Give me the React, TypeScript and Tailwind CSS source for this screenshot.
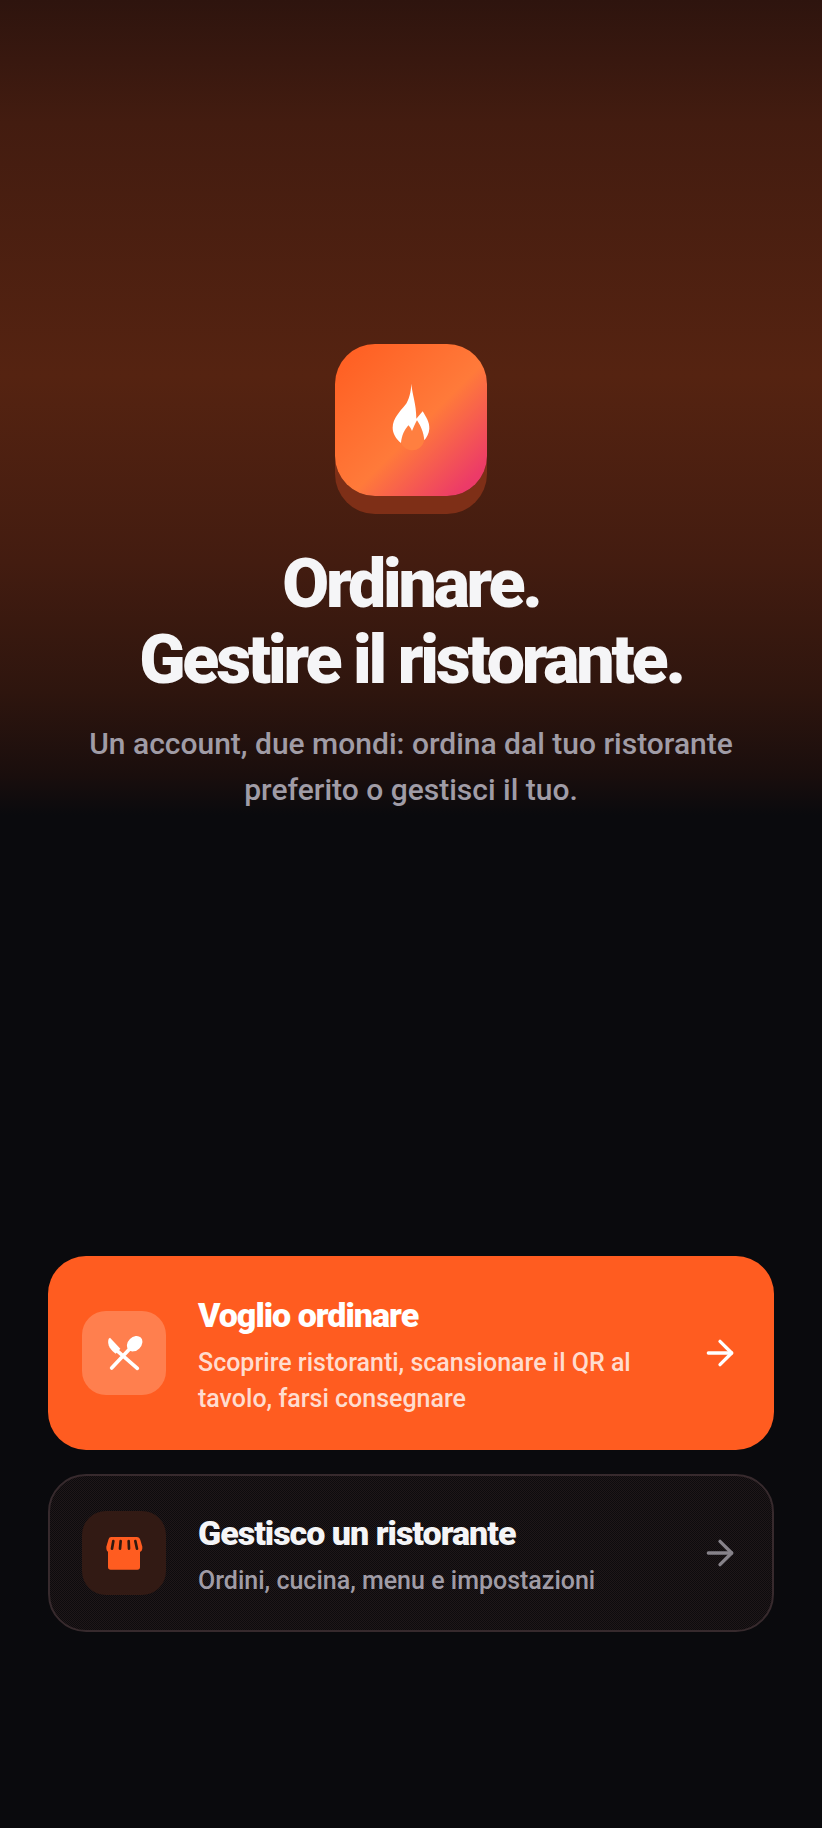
import { ArrowRight } from 'lucide-react';

function FlameIcon() {
  return (
    <svg viewBox="240 185 120 210" className="mb-[7px] h-[70px] w-10">
      <path
        d="M270 368C272 345 280 330 292 315C297 320 300 325 303 332C306 325 312 310 318 300C328 315 338 335 340 360C335 380 320 390 305 390C290 390 277 382 270 368Z"
        fill="#ff7f40"
      />
      <path
        d="M301 190C304 225 316 250 316 295L335 273C345 290 356 305 355 325C354 340 347 350 340 360C338 335 328 315 318 300C312 310 306 325 303 332C300 325 297 320 292 315C280 330 272 345 270 368C255 355 245 340 245 322C245 295 268 272 282 255C294 240 300 215 301 190Z"
        fill="#ffffff"
      />
    </svg>
  );
}

function KnifeSpoonIcon() {
  return (
    <svg viewBox="70 40 120 120" className="h-10 w-10">
      <g fill="#ffffff">
        <ellipse cx="162" cy="72" rx="26" ry="20" transform="rotate(-45 162 72)" />
        <path d="M88 54L119 87L105 102C90 91 78 75 84 57Z" />
      </g>
      <path d="M146 89L93 145M108 92L170 146" stroke="#ffffff" strokeWidth="11" strokeLinecap="round" fill="none" />
    </svg>
  );
}

function StoreIcon() {
  return (
    <svg viewBox="66 63 132 132" className="h-[44px] w-[44px]">
      <rect x="84" y="105" width="96" height="74" rx="8" fill="#ff5c20" />
      <path d="M94 81H170C176 81 179 84 181 90L187 110C188 120 184 126 176 126H88C82 126 78 120 79 110L85 90C87 84 88 81 94 81Z" fill="#ff5c20" />
      <path d="M100 93L96 116M122 93L120 116M146 93L147 116M166 93L171 116" stroke="#31190f" strokeWidth="8" strokeLinecap="round" fill="none" />
    </svg>
  );
}

export default function App() {
  return (
    <div className="flex min-h-[1828px] flex-col bg-[#0a0a0d] font-['Roboto',sans-serif]">
      {/* hero */}
      <div className="flex h-[815px] flex-col items-center bg-[linear-gradient(180deg,#2e140e_0%,#431c10_15%,#552311_46%,#431c10_69%,#2e150e_85%,#1a0e0d_95%,#0a0a0d_100%)] pt-[344px]">
        <div className="flex h-[152px] w-[152px] items-center justify-center rounded-[40px] bg-[linear-gradient(135deg,#ff5c20_0%,#ff7a3a_55%,#ec3a68_90%)] shadow-[0_18px_0_0_#7e2f17]">
          <FlameIcon />
        </div>
        <h1 className="mt-[50px] text-center text-[68px] leading-[76px] font-black tracking-[-3.2px] text-[#f5f5f7]">
          Ordinare.
          <br />
          Gestire il ristorante.
        </h1>
        <p className="mt-[23px] w-[700px] text-center text-[30px] leading-[46px] font-medium text-[#a09ca6]">
          Un account, due mondi: ordina dal tuo ristorante preferito o gestisci il tuo.
        </p>
      </div>

      {/* role cards */}
      <div className="mt-[441px] flex flex-col gap-[24px] px-[48px]">
        <div className="flex h-[194px] items-center gap-[32px] rounded-[38px] bg-[#ff5c20] px-[34px]">
          <div className="flex h-[84px] w-[84px] shrink-0 items-center justify-center rounded-[24px] bg-[#ff7f4e]">
            <KnifeSpoonIcon />
          </div>
          <div className="min-w-0 flex-1 pt-[5px]">
            <div className="text-[34px] leading-[40px] font-black tracking-[-1px] text-white">Voglio ordinare</div>
            <div className="mt-[10px] text-[25px] leading-[36px] font-medium text-[#ffdccf]">
              Scoprire ristoranti, scansionare il QR al tavolo, farsi consegnare
            </div>
          </div>
          <ArrowRight size={40} className="shrink-0 text-white" />
        </div>

        <div className="flex h-[158px] items-center gap-[32px] rounded-[38px] border-2 border-[#372a2d] bg-[repeating-conic-gradient(#1f1719_0_25%,#0d0b0d_0_50%)] bg-[length:2px_2px] px-[32px]">
          <div className="flex h-[84px] w-[84px] shrink-0 items-center justify-center rounded-[24px] bg-[#321a14]">
            <StoreIcon />
          </div>
          <div className="min-w-0 flex-1 pt-[5px]">
            <div className="text-[34px] leading-[40px] font-black tracking-[-1px] text-[#f5f5f7]">Gestisco un ristorante</div>
            <div className="mt-[10px] text-[25px] leading-[36px] font-medium text-[#a09ca6]">
              Ordini, cucina, menu e impostazioni
            </div>
          </div>
          <ArrowRight size={40} className="shrink-0 text-[#87838a]" />
        </div>
      </div>
    </div>
  );
}
